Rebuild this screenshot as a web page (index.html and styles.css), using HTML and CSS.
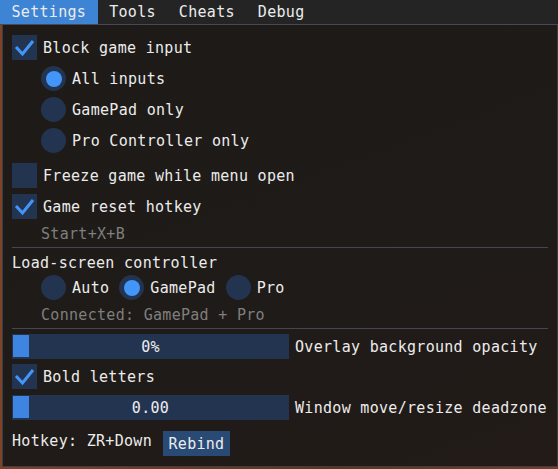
FILE: index.html
```html
<!DOCTYPE html>
<html lang="en">
  <head>
    <meta charset="UTF-8" />
    <meta name="viewport" content="width=device-width, initial-scale=1.0" />
    <title>Settings</title>
    <link rel="stylesheet" href="styles.css">
  </head>
  <body>
    <!-- 菜单栏 -->
    <div class="menubar">
      <div class="menu-item active">Settings</div>
      <div class="menu-item">Tools</div>
      <div class="menu-item">Cheats</div>
      <div class="menu-item">Debug</div>
    </div>

    <!-- 设置窗口 -->
    <div class="window">
      <div class="check">
        <span class="box"><svg viewBox="0 0 25 25"><polyline points="4,12 10.5,19 21,6" /></svg></span>
        <span class="text">Block game input</span>
      </div>

      <div class="radio-list">
        <div class="radio on"><span class="circle"></span><span class="text">All inputs</span></div>
        <div class="radio"><span class="circle"></span><span class="text">GamePad only</span></div>
        <div class="radio"><span class="circle"></span><span class="text">Pro Controller only</span></div>
      </div>

      <div class="check mt-10">
        <span class="box"></span>
        <span class="text">Freeze game while menu open</span>
      </div>
      <div class="check mt-6">
        <span class="box"><svg viewBox="0 0 25 25"><polyline points="4,12 10.5,19 21,6" /></svg></span>
        <span class="text">Game reset hotkey</span>
      </div>
      <div class="hint">Start+X+B</div>

      <div class="separator"></div>

      <div class="heading">Load-screen controller</div>
      <div class="radio-row">
        <div class="radio"><span class="circle"></span><span class="text">Auto</span></div>
        <div class="radio on"><span class="circle"></span><span class="text">GamePad</span></div>
        <div class="radio"><span class="circle"></span><span class="text">Pro</span></div>
      </div>
      <div class="hint">Connected: GamePad + Pro</div>

      <div class="separator"></div>

      <div class="slider-row mt-5">
        <div class="slider"><span class="grab"></span><span class="value">0%</span></div>
        <span class="text">Overlay background opacity</span>
      </div>
      <div class="check mt-5">
        <span class="box"><svg viewBox="0 0 25 25"><polyline points="4,12 10.5,19 21,6" /></svg></span>
        <span class="text">Bold letters</span>
      </div>
      <div class="slider-row mt-6">
        <div class="slider"><span class="grab"></span><span class="value">0.00</span></div>
        <span class="text">Window move/resize deadzone</span>
      </div>

      <div class="hotkey-row">
        <span class="hotkey">Hotkey: ZR+Down</span>
        <div class="button">Rebind</div>
      </div>
    </div>
  </body>
</html>
```

FILE: styles.css
```css
* {
  padding: 0;
  margin: 0;
  box-sizing: border-box;
}

body {
  width: 558px;
  height: 469px;
  overflow: hidden;

  font-family: "DejaVu Sans Mono", "Liberation Mono", monospace;
  font-size: 15px;
  letter-spacing: 0.3px;
  color: #ececec;

  background: linear-gradient(90deg, #7b4327, #5e3520 60%, #734028);
}

/* 菜单栏 */
.menubar {
  display: flex;
  height: 25px;
  border-bottom: 1px solid #4a4854;

  background-color: #242424;
}

.menubar .menu-item {
  padding: 0 11.5px;
  line-height: 25px;
}

.menubar .menu-item.active {
  background-color: #3e84d4;
}

/* 窗口 */
.window {
  display: flex;
  flex-direction: column;
  width: 556px;
  height: 442px;
  margin-left: 2px;
  padding: 10px 9px 0;
  border: 1px solid #3e3d47;
  border-top: none;

  background: linear-gradient(160deg, #1d1a17, #1f1b18 60%, #221b18);
}

.mt-5 {
  margin-top: 5px;
}

.mt-6 {
  margin-top: 6px;
}

.mt-10 {
  margin-top: 10px;
}

.text {
  padding-top: 2px;
  line-height: 17px;
  white-space: nowrap;
}

/* 复选框 */
.check {
  display: flex;
  align-items: center;
  height: 25px;
}

.check .box {
  width: 25px;
  height: 25px;
  margin-right: 6px;

  background-color: #233450;
}

.check .box svg {
  display: block;
  width: 25px;
  height: 25px;
}

.check .box polyline {
  fill: none;
  stroke: #4296fa;
  stroke-width: 3;
}

/* 单选框 */
.radio-list {
  display: flex;
  flex-direction: column;
  gap: 6px;
  margin-top: 6px;
  padding-left: 29px;
}

.radio-row {
  display: flex;
  gap: 10px;
  margin-top: 4px;
  padding-left: 29px;
}

.radio {
  display: flex;
  align-items: center;
  height: 25px;
}

.radio .circle {
  display: flex;
  align-items: center;
  justify-content: center;
  width: 25px;
  height: 25px;
  margin-right: 6px;
  border-radius: 50%;

  background-color: #233450;
}

.radio.on .circle::after {
  content: "";
  width: 16px;
  height: 16px;
  border-radius: 50%;

  background-color: #4296fa;
}

/* 文本 */
.hint {
  height: 17px;
  margin-top: 6px;
  padding-left: 29px;
  line-height: 19px;

  color: #7f7f7f;
}

.heading {
  height: 17px;
  margin-top: 6px;
  line-height: 19px;
}

.separator {
  height: 1px;
  margin-top: 5px;

  background-color: #47454f;
}

/* 滑块 */
.slider-row {
  display: flex;
  align-items: center;
  gap: 6px;
  height: 25px;
}

.slider {
  position: relative;
  display: flex;
  align-items: center;
  justify-content: center;
  width: 277px;
  height: 25px;

  background-color: #233450;
}

.slider .grab {
  position: absolute;
  top: 1px;
  bottom: 2px;
  left: 1px;
  width: 16px;

  background-color: #3d85e0;
}

.slider .value {
  position: relative;
  padding-top: 2px;
  line-height: 17px;
}

/* 热键 */
.hotkey-row {
  display: flex;
  align-items: flex-start;
  gap: 11px;
  margin-top: 11px;
}

.hotkey {
  margin-top: 2px;
  line-height: 17px;
}

.button {
  width: 67px;
  height: 25px;
  padding-top: 5px;
  line-height: 17px;
  text-align: center;

  background-color: #294a75;
}
```
